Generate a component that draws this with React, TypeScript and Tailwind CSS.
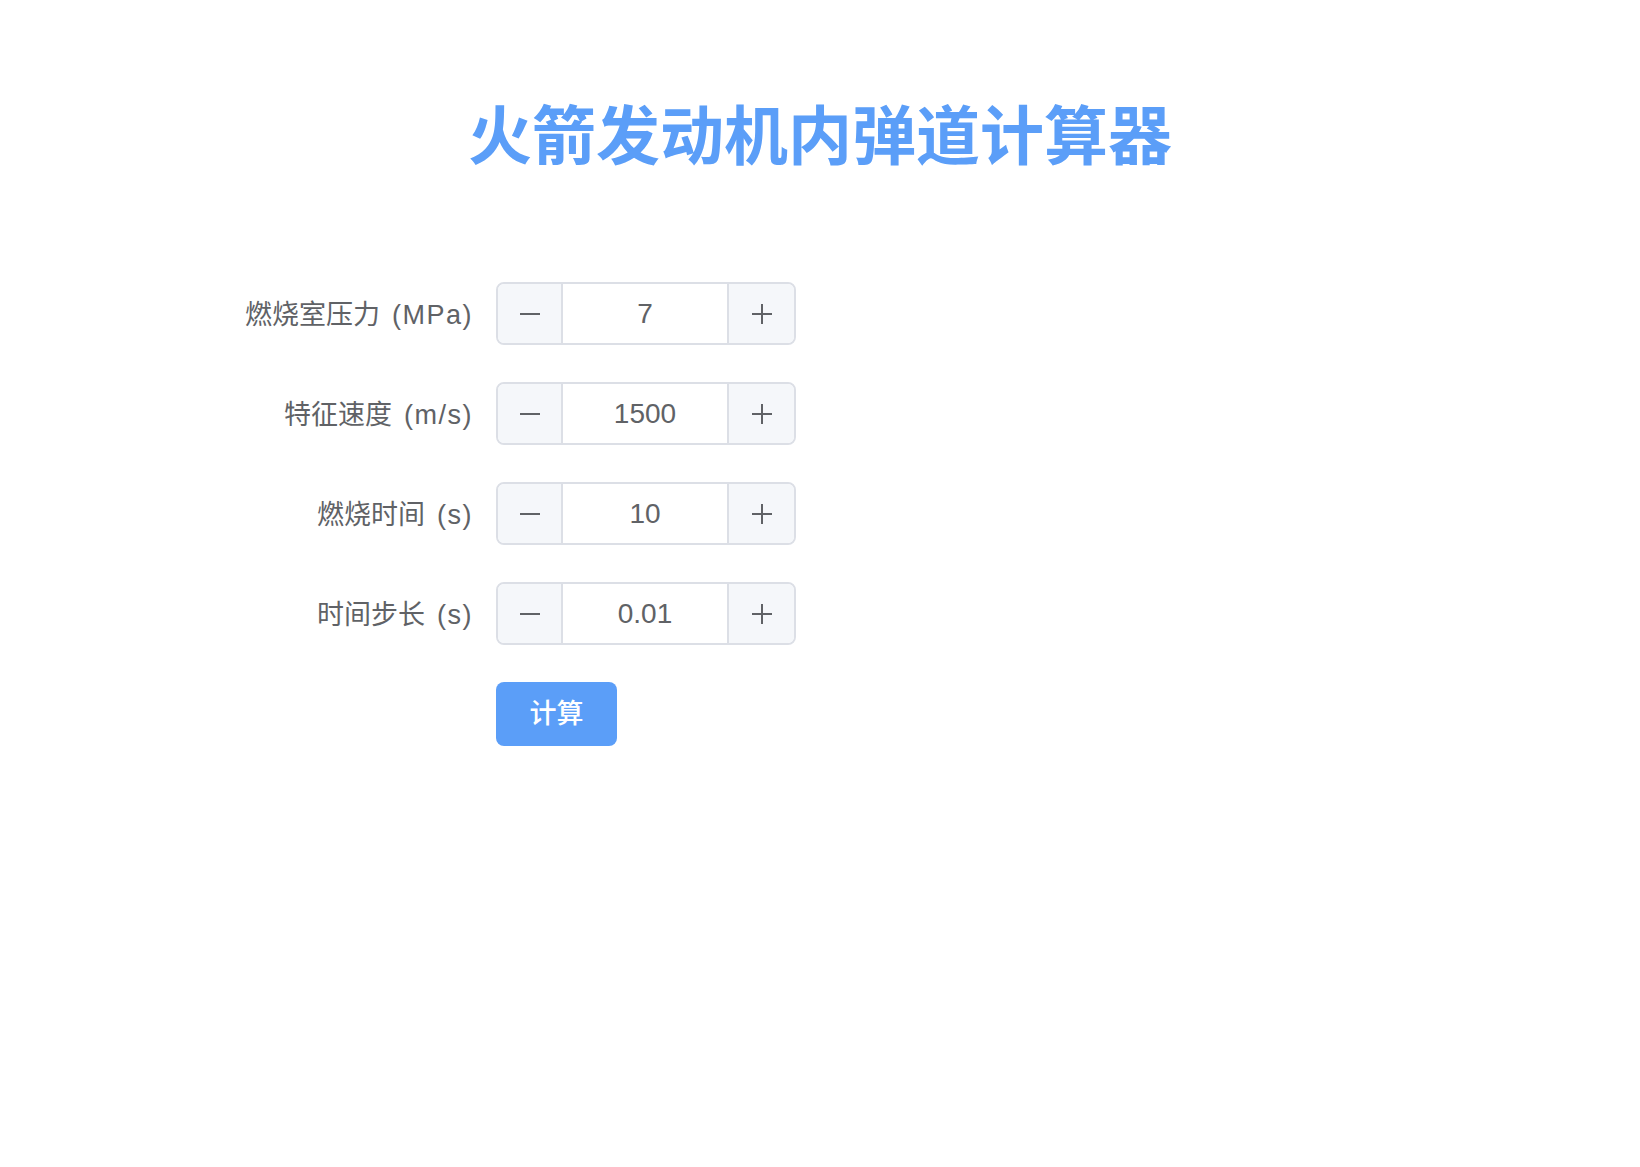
import { useState } from 'react';

type Field = {
  key: string;
  label: string;
  unit: string;
  value: number;
  step: number;
  precision: number;
};

const initialFields: Field[] = [
  { key: 'pc', label: '燃烧室压力', unit: '(MPa)', value: 7, step: 1, precision: 0 },
  { key: 'cstar', label: '特征速度', unit: '(m/s)', value: 1500, step: 1, precision: 0 },
  { key: 'tb', label: '燃烧时间', unit: '(s)', value: 10, step: 1, precision: 0 },
  { key: 'dt', label: '时间步长', unit: '(s)', value: 0.01, step: 0.01, precision: 2 },
];

function MinusIcon() {
  return (
    <svg width="22" height="22" viewBox="0 0 22 22" fill="none">
      <path d="M1 11h20" stroke="#606266" strokeWidth="2" />
    </svg>
  );
}

function PlusIcon() {
  return (
    <svg width="22" height="22" viewBox="0 0 22 22" fill="none">
      <path d="M1 11h20M11 1v20" stroke="#606266" strokeWidth="2" />
    </svg>
  );
}

function InputNumber({ field, onChange }: { field: Field; onChange: (v: number) => void }) {
  const fmt = (v: number) => (field.precision > 0 ? v.toFixed(field.precision) : String(v));
  const bump = (d: number) => onChange(Number((field.value + d * field.step).toFixed(field.precision)));

  return (
    <div className="flex h-[63px] w-[300px] overflow-hidden rounded-[8px] border-2 border-[#dcdfe6] bg-white">
      {/* 减少 */}
      <button
        onClick={() => bump(-1)}
        className="flex w-[65px] items-center justify-center border-r-2 border-[#dcdfe6] bg-[#f5f7fa]"
      >
        <MinusIcon />
      </button>
      <input
        value={fmt(field.value)}
        onChange={(e) => {
          const n = Number(e.target.value);
          if (!Number.isNaN(n)) onChange(n);
        }}
        className="min-w-0 flex-1 bg-white text-center text-[28px] text-[#606266] outline-none"
      />
      {/* 增加 */}
      <button
        onClick={() => bump(1)}
        className="flex w-[67px] items-center justify-center border-l-2 border-[#dcdfe6] bg-[#f5f7fa]"
      >
        <PlusIcon />
      </button>
    </div>
  );
}

export default function App() {
  const [fields, setFields] = useState<Field[]>(initialFields);

  const update = (key: string, v: number) =>
    setFields((fs) => fs.map((f) => (f.key === key ? { ...f, value: v } : f)));

  return (
    <div
      className="min-h-[1167px] bg-white"
      style={{ fontFamily: '"Liberation Sans", "Noto Sans CJK SC", sans-serif' }}
    >
      <h1 className="pt-[97px] text-center text-[64px] font-bold leading-[80px] text-[#5b9ef8]">
        火箭发动机内弹道计算器
      </h1>

      <div className="mx-auto mt-[105px] w-[1208px]">
        {fields.map((f) => (
          <div key={f.key} className="mb-[37px] flex h-[63px] items-center">
            <label className="w-[280px] pt-[3px] pr-[23px] text-right text-[27px] text-[#606266]">
              {f.label}
              <span className="ml-[12px] tracking-[1.5px]">{f.unit}</span>
            </label>
            <InputNumber field={f} onChange={(v) => update(f.key, v)} />
          </div>
        ))}

        <div className="flex">
          <div className="w-[280px]" />
          <button className="h-[64px] w-[121px] rounded-[8px] bg-[#5b9ef8] text-[27px] font-medium text-white">
            计算
          </button>
        </div>
      </div>
    </div>
  );
}
